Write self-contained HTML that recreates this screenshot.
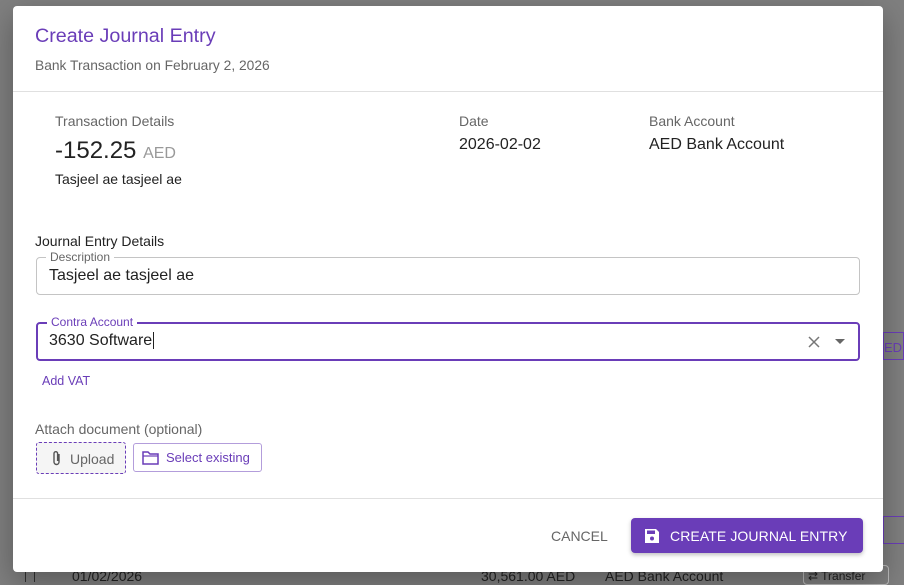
<!DOCTYPE html>
<html><head><meta charset="utf-8"><style>
*{box-sizing:border-box;margin:0;padding:0}
body{width:904px;height:582px;overflow:hidden;background:#7f7f7f;font-family:"Liberation Sans",sans-serif;position:relative}
.bg{position:absolute;color:#222;font-size:14px}
.dlg{position:absolute;left:13px;top:6px;width:870px;height:566px;background:#fff;border-radius:4px;box-shadow:0 10px 30px rgba(0,0,0,.3)}
.a{position:absolute;white-space:nowrap}
.p{color:#6a3db8}
.g{color:#666}
.fld{position:absolute;border:1px solid #c4c4c4;border-radius:4px}
.lab{position:absolute;top:-8px;left:9px;background:#fff;padding:0 4px;font-size:12px;color:#666;line-height:14px}
</style></head><body>
<div class="bg" style="left:25px;top:567px;width:10px;height:15px;border:1px solid #333;border-bottom:none"></div>
<div class="bg" style="left:72px;top:568px">01/02/2026</div>
<div class="bg" style="left:481px;top:568px">30,561.00 AED</div>
<div class="bg" style="left:605px;top:568px">AED Bank Account</div>
<div class="bg" style="left:803px;top:565px;width:86px;height:20px;border:1px solid #bbb;border-radius:4px;font-size:12px;padding:3px 0 0 4px">⇄ Transfer</div>
<div class="bg" style="left:883px;top:332px;width:21px;height:28px;border:1px solid #6a3db8;color:#6a3db8;font-size:13px;padding-top:7px">ED</div>
<div class="bg" style="left:883px;top:516px;width:21px;height:28px;border:1px solid #6a3db8;border-right:none"></div>
<div class="dlg">
 <div class="a p" style="left:22px;top:19px;font-size:19.7px">Create Journal Entry</div>
 <div class="a g" style="left:22px;top:52px;font-size:13.8px">Bank Transaction on February 2, 2026</div>
 <div class="a" style="left:0;top:85px;width:870px;border-top:1px solid #e0e0e0"></div>
 <div class="a g" style="left:42px;top:107px;font-size:14px">Transaction Details</div>
 <div class="a" style="left:42px;top:131px;font-size:24px;color:#222">-152.25 <span style="font-size:16px;color:#999">AED</span></div>
 <div class="a" style="left:42px;top:165px;font-size:14px;color:#222">Tasjeel ae tasjeel ae</div>
 <div class="a g" style="left:446px;top:107px;font-size:14px">Date</div>
 <div class="a" style="left:446px;top:130px;font-size:16px;color:#222">2026-02-02</div>
 <div class="a g" style="left:636px;top:107px;font-size:14px">Bank Account</div>
 <div class="a" style="left:636px;top:130px;font-size:16px;color:#222">AED Bank Account</div>
 <div class="a" style="left:22px;top:227px;font-size:14px;color:#222">Journal Entry Details</div>
 <div class="fld" style="left:23px;top:251px;width:824px;height:38px"><div class="lab">Description</div><div class="a" style="left:12px;top:9px;font-size:16px;color:#222">Tasjeel ae tasjeel ae</div></div>
 <div class="fld" style="left:23px;top:316px;width:824px;height:39px;border:2px solid #6a3db8"><div class="lab p" style="top:-9px;color:#6a3db8">Contra Account</div><div class="a" style="left:11px;top:8px;font-size:16px;color:#222">3630 Software<span style="border-left:1px solid #222;margin-left:1px"></span></div>
  <svg class="a" style="left:768px;top:10px" width="16" height="16" viewBox="0 0 16 16"><path d="M3 3L13 13M13 3L3 13" stroke="#777" stroke-width="1.5"/></svg>
  <svg class="a" style="left:796px;top:15px" width="12" height="6" viewBox="0 0 12 6"><path d="M1 0L11 0L6 5Z" fill="#666"/></svg>
 </div>
 <div class="a p" style="left:29px;top:368px;font-size:12.5px">Add VAT</div>
 <div class="a g" style="left:22px;top:415px;font-size:14px">Attach document (optional)</div>
 <div class="a" style="left:23px;top:436px;width:90px;height:32px;border:1px dashed #6a3db8;border-radius:3px;background:#f5f5f5"><svg class="a" style="left:14px;top:7px" width="12" height="17" viewBox="0 0 12 17"><path d="M8 4V12a2.5 2.5 0 0 1-5 0V3.5a1.8 1.8 0 0 1 3.6 0V11" fill="none" stroke="#555" stroke-width="1.4"/></svg><div class="a g" style="left:33px;top:8px;font-size:14px">Upload</div></div>
 <div class="a" style="left:120px;top:437px;width:129px;height:29px;border:1px solid #b39ddb;border-radius:3px"><svg class="a" style="left:8px;top:7px" width="17" height="14" viewBox="0 0 17 14"><path d="M1 1H6L8 3H16V13H1Z" fill="none" stroke="#6a3db8" stroke-width="1.5"/><path d="M1 5H16" stroke="#6a3db8" stroke-width="1.2"/></svg><div class="a p" style="left:32px;top:6px;font-size:13px">Select existing</div></div>
 <div class="a" style="left:0;top:492px;width:870px;border-top:1px solid #e0e0e0"></div>
 <div class="a g" style="left:538px;top:522px;font-size:14px;letter-spacing:0">CANCEL</div>
 <div class="a" style="left:618px;top:512px;width:232px;height:35px;background:#6a3db8;border-radius:4px;box-shadow:0 2px 4px rgba(0,0,0,.25)"><svg class="a" style="left:13px;top:10px" width="16" height="16" viewBox="0 0 16 16"><path d="M1 1H12L15 4V15H1Z" fill="#fff"/><rect x="3" y="2.5" width="8" height="3.5" fill="#6a3db8"/><circle cx="8" cy="10.5" r="2" fill="#6a3db8"/></svg><div class="a" style="left:39px;top:10px;font-size:14px;color:#fff;letter-spacing:0.1px">CREATE JOURNAL ENTRY</div></div>
</div>
</body></html>
